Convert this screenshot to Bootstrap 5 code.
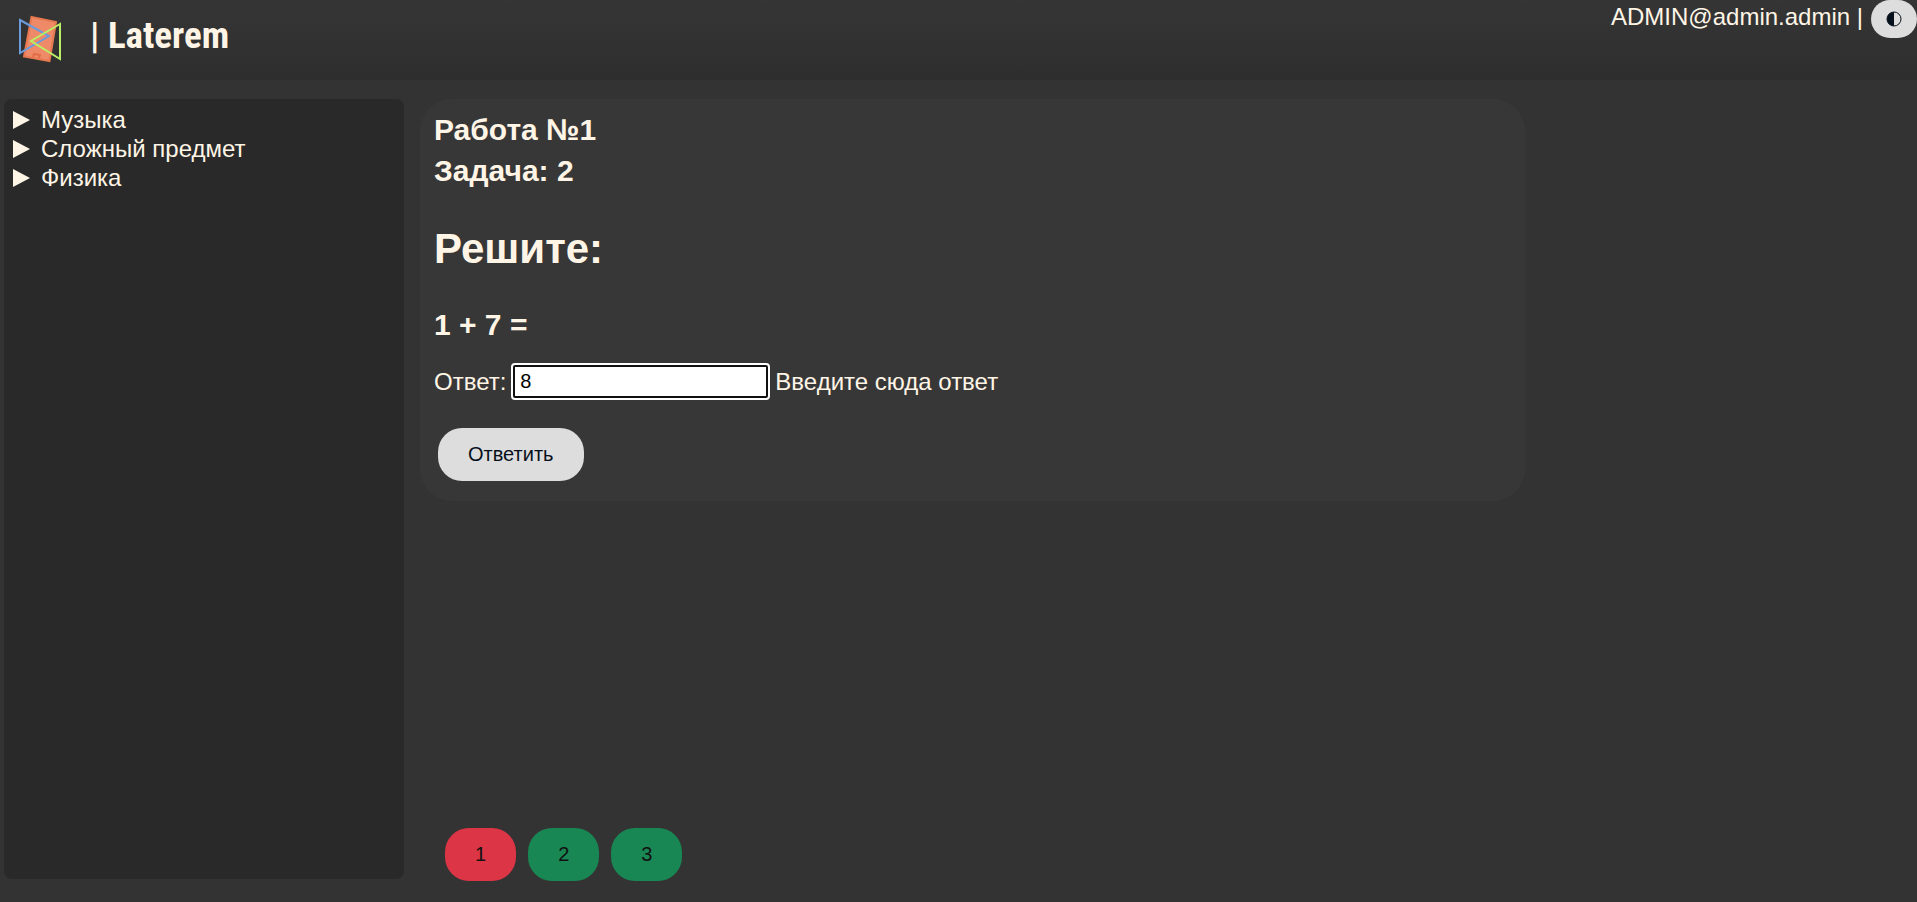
<!DOCTYPE html>
<html lang="ru">
<head>
<meta charset="utf-8">
<meta name="viewport" content="width=device-width, initial-scale=1">
<title>Laterem</title>
<link href="https://cdn.jsdelivr.net/npm/bootstrap@5.3.0/dist/css/bootstrap.min.css" rel="stylesheet">
<style>
  body { background: #333; color: #fff5e6; font: 24px/29px "Liberation Sans", Arial, sans-serif; }
  .site-header { height: 80px; background: linear-gradient(#353535, #2e2e2e); }
  .brand { color: inherit; padding-left: 16px; gap: 26px; }
  .brand-name { font: bold 37px/40px "Roboto Condensed", "Open Sans Condensed", "Liberation Sans", sans-serif; padding-top: 16px; }
  .account { padding-top: 2px; }
  .pill { border: 0; border-radius: 24px; background: #ddd; color: #06101c; font-size: 20px; line-height: 23px; padding: 15px 30px; }
  .pill-theme { padding: 7px 15px; height: 38px; }
  .pill-red { background: #dc3545; color: #111; }
  .pill-green { background: #198754; color: #111; }
  .page-body { padding: 19px 4px 21px; }
  .subjects { width: 400px; background: #292929; border-radius: 8px; padding: 6px 8px; margin-bottom: 2px; }
  .subjects summary { list-style: none; display: flex; align-items: center; gap: 11px; }
  .subjects summary::-webkit-details-marker { display: none; }
  .task-column { padding: 0 11px 0 16px; }
  .task-card { background: #373737; border-radius: 32px; padding: 10px 14px 20px; }
  .task-card h1 { font-size: 42px; line-height: 52px; font-weight: bold; margin: 32px 0 29px; }
  .task-card h2 { font-size: 30px; line-height: 41px; font-weight: bold; margin: 0; }
  .answer-line { margin: 20px 0 30px; gap: 5px; }
  .answer-field { width: 255px; height: 33px; font-size: 20px; line-height: 23px; padding: 2px 5px; border: 2px solid #101010; border-radius: 2px; outline: 2px solid #fff; background: #fff; color: #000; margin: 0 2px; }
  .task-pages { gap: 12px; padding-left: 25px; }
</style>
</head>
<body class="min-vh-100 d-flex flex-column">
<header class="site-header d-flex justify-content-between align-items-start">
  <a href="#" class="brand d-flex text-decoration-none">
    <svg width="48" height="64" viewBox="0 0 48 64" aria-hidden="true">
      <path d="M15.500 17 40 22 33.500 61 8 56.500z" fill="#ef8a68" stroke="#e67850" stroke-width="2"/>
      <path d="M17 57l1-3 6 1-1 3" fill="none" stroke="#e26c48" stroke-width="2"/>
      <path d="M4 20 33 36 4 53z" fill="none" stroke="#6c9bdc" stroke-width="2"/>
      <path d="M44 24 15 41 44 59z" fill="none" stroke="#b9ee66" stroke-width="2"/>
    </svg>
    <span class="brand-name">| Laterem</span>
  </a>
  <div class="d-flex gap-2">
    <span class="account">ADMIN@admin.admin |</span>
    <button type="button" class="pill pill-theme d-flex align-items-center" aria-label="Сменить тему">
      <svg width="16" height="16" viewBox="0 0 16 16" aria-hidden="true"><circle cx="8" cy="8" r="7" fill="none" stroke="#06101c"/><path d="M8 1a7 7 0 0 0 0 14z" fill="#06101c"/></svg>
    </button>
  </div>
</header>
<main class="page-body d-flex flex-grow-1">
  <nav class="subjects flex-shrink-0">
    <details><summary><svg width="18" height="18" viewBox="0 0 18 18" aria-hidden="true"><path d="M1 0 18 9 1 18z" fill="#fff5e6"/></svg>Музыка</summary></details>
    <details><summary><svg width="18" height="18" viewBox="0 0 18 18" aria-hidden="true"><path d="M1 0 18 9 1 18z" fill="#fff5e6"/></svg>Сложный предмет</summary></details>
    <details><summary><svg width="18" height="18" viewBox="0 0 18 18" aria-hidden="true"><path d="M1 0 18 9 1 18z" fill="#fff5e6"/></svg>Физика</summary></details>
  </nav>
  <div class="row g-0 flex-grow-1">
    <div class="task-column col-9 d-flex flex-column justify-content-between">
      <form class="task-card">
        <h2>Работа №1</h2>
        <h2>Задача: 2</h2>
        <h1>Решите:</h1>
        <h2>1 + 7 =</h2>
        <div class="answer-line d-flex align-items-center">
          <label for="answer">Ответ:</label>
          <input id="answer" type="text" class="answer-field" value="8">
          <span>Введите сюда ответ</span>
        </div>
        <button type="button" class="pill ms-1">Ответить</button>
      </form>
      <div class="task-pages d-flex">
        <button type="button" class="pill pill-red">1</button>
        <button type="button" class="pill pill-green">2</button>
        <button type="button" class="pill pill-green">3</button>
      </div>
    </div>
  </div>
</main>
<script src="https://cdn.jsdelivr.net/npm/bootstrap@5.3.0/dist/js/bootstrap.bundle.min.js"></script>
</body>
</html>
